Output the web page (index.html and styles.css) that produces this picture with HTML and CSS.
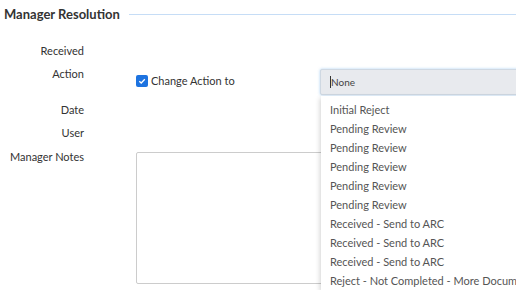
FILE: index.html
```html
<!DOCTYPE html>
<html lang="en">
  <head>
    <meta charset="UTF-8" />
    <title>Manager Resolution</title>
    <link rel="stylesheet" href="styles.css">
  </head>
  <body>
    <div class="panel">
      <div class="legend">
        <span class="legend-text">Manager Resolution</span>
        <span class="legend-line"></span>
      </div>

      <div class="row row-received">
        <div class="label">Received</div>
        <div class="field"></div>
      </div>

      <div class="row row-action">
        <div class="label">Action</div>
        <div class="field action-field">
          <label class="check">
            <span class="box">
              <svg width="8" height="8" viewBox="0 0 8 8"><path d="M1.3 4.2 L3.2 6 L6.8 2.2" fill="none" stroke="#fff" stroke-width="1.3"/></svg>
            </span>
            Change Action to
          </label>
          <div class="select">
            <span class="caret"></span>None
            <ul class="menu">
              <li>Initial Reject</li>
              <li>Pending Review</li>
              <li>Pending Review</li>
              <li>Pending Review</li>
              <li>Pending Review</li>
              <li>Pending Review</li>
              <li>Received - Send to ARC</li>
              <li>Received - Send to ARC</li>
              <li>Received - Send to ARC</li>
              <li>Reject - Not Completed - More Documents</li>
            </ul>
          </div>
        </div>
      </div>

      <div class="row row-date">
        <div class="label">Date</div>
        <div class="field"></div>
      </div>

      <div class="row row-user">
        <div class="label">User</div>
        <div class="field"></div>
      </div>

      <div class="row row-notes">
        <div class="label">Manager Notes</div>
        <div class="field">
          <div class="notes"></div>
        </div>
      </div>
    </div>
  </body>
</html>
```

FILE: styles.css
```css
body {
  margin: 0;
  font-family: Lato, "Liberation Sans", sans-serif;
  color: #333;
  overflow: hidden;
  background: #fff;
}

.panel {
  width: 516px;
  height: 290px;
  overflow: hidden;
  position: relative;
}

.legend {
  display: flex;
  align-items: center;
  height: 28px;
  padding-left: 4px;
}

.legend-text {
  font-size: 13px;
  font-weight: bold;
  color: #333;
}

.legend-line {
  flex: 1;
  height: 1px;
  margin-left: 9px;
  background: #c6ddf6;
}

.row {
  display: grid;
  grid-template-columns: 84px 1fr;
  column-gap: 52px;
}

.label {
  text-align: right;
  font-size: 11px;
  line-height: 16px;
}

.row-received {
  margin-top: 15px;
  height: 23px;
}

.row-action {
  height: 36px;
}

.row-date {
  height: 23px;
}

.row-user {
  height: 24px;
}

.action-field {
  display: flex;
  align-items: center;
  height: 26px;
  margin-top: 3px;
}

.check {
  display: flex;
  align-items: center;
  gap: 3px;
  font-size: 11px;
  width: 184px;
  margin-top: -3px;
}

.box {
  width: 12px;
  height: 12px;
  border-radius: 2px;
  background: #1d73e0;
  display: flex;
  align-items: center;
  justify-content: center;
}

.select {
  position: relative;
  width: 220px;
  height: 26px;
  box-sizing: border-box;
  border: 1px solid #cfd8e2;
  border-radius: 2px;
  background: #e8eaee;
  box-shadow: 0 0 3px rgba(120, 180, 235, 0.6);
  font-size: 10px;
  line-height: 24px;
  padding-left: 9px;
  color: #444;
}

.caret {
  display: inline-block;
  width: 1px;
  height: 12px;
  background: #333;
  vertical-align: -2px;
}

.menu {
  position: absolute;
  left: 0;
  top: 26px;
  width: 220px;
  margin: 0;
  padding: 4px 0 0;
  list-style: none;
  background: #fff;
  box-shadow: -1px 2px 5px rgba(0, 0, 0, 0.18);
  font-size: 11px;
  line-height: 19px;
  color: #555;
  z-index: 2;
}

.menu li {
  padding-left: 9px;
  white-space: nowrap;
}

.notes {
  width: 240px;
  height: 132px;
  box-sizing: border-box;
  margin-top: 3px;
  border: 1px solid #ccc;
  border-radius: 2px;
}
```
